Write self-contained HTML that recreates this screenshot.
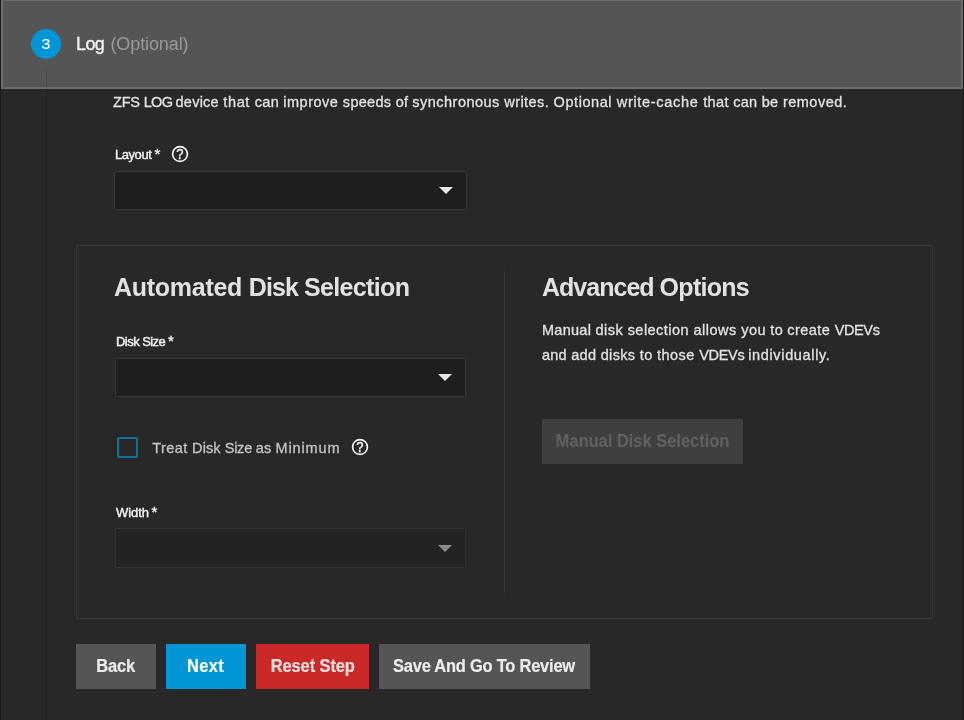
<!DOCTYPE html>
<html lang="en">
<head>
<meta charset="utf-8">
<title>Pool Creation Wizard - Log</title>
<style>
  html, body { margin: 0; padding: 0; }
  body {
    width: 964px; height: 720px; overflow: hidden; position: relative;
    background: #191919;
    font-family: "Liberation Sans", sans-serif;
    color: #e4e4e4;
  }
  .abs { position: absolute; }
  .stage { left: 0; top: 0; width: 964px; height: 720px; will-change: transform; }
  .card { left: 1px; top: 0; width: 962px; height: 720px; background: #282828; }
  .step-header {
    left: 1px; top: -1px; width: 962px; height: 90px; box-sizing: border-box;
    background: #555555; border: 2px solid #6c6c6c;
  }
  .vline { left: 46px; top: 69px; width: 1px; height: 651px; background: rgba(0,0,0,.13); }
  .step-icon {
    left: 31px; top: 29px; width: 30px; height: 30px; border-radius: 50%;
    background: #0095d5; color: #fff; font-size: 14.5px; line-height: 30px; text-align: center;
  }
  .step-icon span { display: inline-block; transform: scaleX(1.1); -webkit-text-stroke: 0.15px #fff; }
  .step-label { left: 76px; top: 33px; font-size: 18px; line-height: 22px; white-space: nowrap; }
  .step-label .name { color: #f2f2f2; letter-spacing: -0.6px; -webkit-text-stroke: 0.35px #f2f2f2; }
  .step-label .opt { color: #999999; letter-spacing: -0.1px; margin-left: 6.2px; }
  .desc { left: 113px; top: 93px; font-size: 14.5px; line-height: 18px; letter-spacing: 0; white-space: nowrap; color: #e2e2e2; -webkit-text-stroke: 0.3px #e2e2e2; }
  .flabel { font-size: 13px; line-height: 16px; white-space: nowrap; color: #f4f4f4; -webkit-text-stroke: 0.4px #f4f4f4; }
  .ast { font-size: 15px; line-height: 10px; letter-spacing: 0; position: relative; top: 0px; }
  .select {
    box-sizing: border-box; background: #1e1e1e; border: 1px solid #383838; border-radius: 2px;
  }
  .select.disabled { background: #232323; border-color: #303030; }
  .arrow { width: 0; height: 0; border-left: 7px solid transparent; border-right: 7px solid transparent; border-top: 7px solid #e6e6e6; }
  .arrow.dim { border-top-color: #8a8a8a; }
  .panel { left: 76px; top: 245px; width: 857px; height: 374px; box-sizing: border-box; border: 1px solid #363636; }
  .divider { left: 504px; top: 271px; width: 1px; height: 322px; background: #373737; }
  h2 { margin: 0; font-size: 25px; line-height: 30px; font-weight: bold; white-space: nowrap; color: #e2e2e2; }
  .para { font-size: 14.5px; line-height: 25px; letter-spacing: 0; white-space: nowrap; color: #e2e2e2; -webkit-text-stroke: 0.3px #e2e2e2; }
  .checkbox { left: 117px; top: 437px; width: 21px; height: 21px; box-sizing: border-box; border: 2px solid #0c74a1; border-radius: 2px; }
  .cblabel { left: 152.2px; top: 439px; font-size: 14.5px; line-height: 18px; letter-spacing: 0; white-space: nowrap; color: #c4c4c4; -webkit-text-stroke: 0.3px #c4c4c4; }
  .btn {
    height: 45px; box-sizing: border-box; text-align: center; font-weight: bold;
    font-size: 18.3px; line-height: 44px; letter-spacing: -0.1px; white-space: nowrap; color: #f0f0f0;
  }
  .btn span { display: inline-block; transform: scaleX(0.9); transform-origin: 50% 50%; }
  .btn.grey { background: #555555; color: #ececec; -webkit-text-stroke: 0.2px #ececec; }
  .btn.blue { background: #0095d5; color: #ffffff; -webkit-text-stroke: 0.2px #ffffff; }
  .btn.red { background: #cb2828; color: #f5dede; -webkit-text-stroke: 0.2px #f5dede; }
  .btn.off { background: #3f3f3f; color: #626262; }
  svg { display: block; }
</style>
</head>
<body>
  <div class="abs card"></div>
  <div class="abs stage">

  <!-- step header -->
  <div class="abs step-header"></div>
  <div class="abs step-icon"><span>3</span></div>
  <div class="abs step-label"><span class="name">Log</span><span class="opt">(Optional)</span></div>
  <div class="abs vline"></div>

  <!-- description -->
  <div class="abs desc"><span style="letter-spacing:-0.18px">ZFS </span><span style="letter-spacing:-0.71px">LOG </span><span style="letter-spacing:0.25px">device </span><span style="letter-spacing:0.66px">that </span><span style="letter-spacing:0.29px">can </span><span style="letter-spacing:0.49px">improve </span><span style="letter-spacing:0.30px">speeds </span><span style="letter-spacing:0.16px">of </span><span style="letter-spacing:0.48px">synchronous </span><span style="letter-spacing:0.41px">writes. </span><span style="letter-spacing:0.57px">Optional </span><span style="letter-spacing:0.69px">write-cache </span><span style="letter-spacing:0.38px">that </span><span style="letter-spacing:0.24px">can </span><span style="letter-spacing:0.34px">be </span><span style="letter-spacing:0.50px">removed.</span></div>

  <!-- layout field -->
  <div class="abs flabel" style="left:115px; top:147px; letter-spacing:-0.45px;">Layout<span class="ast" style="margin-left:3.2px;">*</span></div>
  <svg class="abs" style="left:170px; top:144px;" width="20" height="20" viewBox="0 0 20 20">
    <circle cx="10" cy="10" r="7.4" fill="none" stroke="#f4f4f4" stroke-width="1.7"/>
    <text x="10" y="14.9" text-anchor="middle" font-family="Liberation Sans, sans-serif" font-size="14.5" fill="#f4f4f4" stroke="#f4f4f4" stroke-width="0.4" transform="translate(10 0) scale(0.9 1) translate(-10 0)">?</text>
  </svg>
  <div class="abs select" style="left:114px; top:171px; width:353px; height:39px;"></div>
  <div class="abs arrow" style="left:439px; top:187px;"></div>

  <!-- panel -->
  <div class="abs panel"></div>
  <div class="abs divider"></div>

  <h2 class="abs" style="left:114px; top:272px;"><span style="letter-spacing:-0.27px">Automated </span><span style="letter-spacing:-0.91px">Disk </span><span style="letter-spacing:-0.65px">Selection</span></h2>

  <div class="abs flabel" style="left:116px; top:333.5px; letter-spacing:-0.55px;">Disk Size<span class="ast" style="margin-left:2.8px;">*</span></div>
  <div class="abs select" style="left:115px; top:358px; width:351px; height:39px;"></div>
  <div class="abs arrow" style="left:438px; top:374px;"></div>

  <div class="abs checkbox"></div>
  <div class="abs cblabel"><span style="letter-spacing:0.43px">Treat </span><span style="letter-spacing:0.07px">Disk </span><span style="letter-spacing:-0.23px">Size </span><span style="letter-spacing:0.12px">as </span><span style="letter-spacing:0.87px">Minimum</span></div>
  <svg class="abs" style="left:350px; top:437px;" width="20" height="20" viewBox="0 0 20 20">
    <circle cx="10" cy="10" r="7.4" fill="none" stroke="#f4f4f4" stroke-width="1.7"/>
    <text x="10" y="14.9" text-anchor="middle" font-family="Liberation Sans, sans-serif" font-size="14.5" fill="#f4f4f4" stroke="#f4f4f4" stroke-width="0.4" transform="translate(10 0) scale(0.9 1) translate(-10 0)">?</text>
  </svg>

  <div class="abs flabel" style="left:116px; top:505px; letter-spacing:-0.08px;">Width<span class="ast" style="margin-left:2.6px;">*</span></div>
  <div class="abs select disabled" style="left:115px; top:528px; width:351px; height:40px;"></div>
  <div class="abs arrow dim" style="left:438px; top:545px;"></div>

  <h2 class="abs" style="left:542px; top:272px;"><span style="letter-spacing:-0.98px">Advanced </span><span style="letter-spacing:-0.72px">Options</span></h2>
  <div class="abs para" style="left:542px; top:318px;"><span style="letter-spacing:0.27px">Manual </span><span style="letter-spacing:0.47px">disk </span><span style="letter-spacing:0.46px">selection </span><span style="letter-spacing:0.50px">allows </span><span style="letter-spacing:0.40px">you </span><span style="letter-spacing:0.29px">to </span><span style="letter-spacing:0.42px">create </span><span style="letter-spacing:-0.36px">VDEVs</span><br><span style="letter-spacing:0.24px">and </span><span style="letter-spacing:0.32px">add </span><span style="letter-spacing:0.32px">disks </span><span style="letter-spacing:0.42px">to </span><span style="letter-spacing:0.43px">those </span><span style="letter-spacing:-0.29px">VDEVs </span><span style="letter-spacing:0.65px">individually.</span></div>
  <div class="abs btn off" style="left:542px; top:419px; width:201px; letter-spacing:0;"><span>Manual Disk Selection</span></div>

  <!-- actions -->
  <div class="abs btn grey" style="left:76px; top:644px; width:80px;"><span>Back</span></div>
  <div class="abs btn blue" style="left:166px; top:644px; width:80px; letter-spacing:0.35px;"><span>Next</span></div>
  <div class="abs btn red" style="left:256px; top:644px; width:113px;"><span>Reset Step</span></div>
  <div class="abs btn grey" style="left:379px; top:644px; width:211px; letter-spacing:-0.25px;"><span style="position:relative; left:-1px;">Save And Go To Review</span></div>
  </div>
</body>
</html>
